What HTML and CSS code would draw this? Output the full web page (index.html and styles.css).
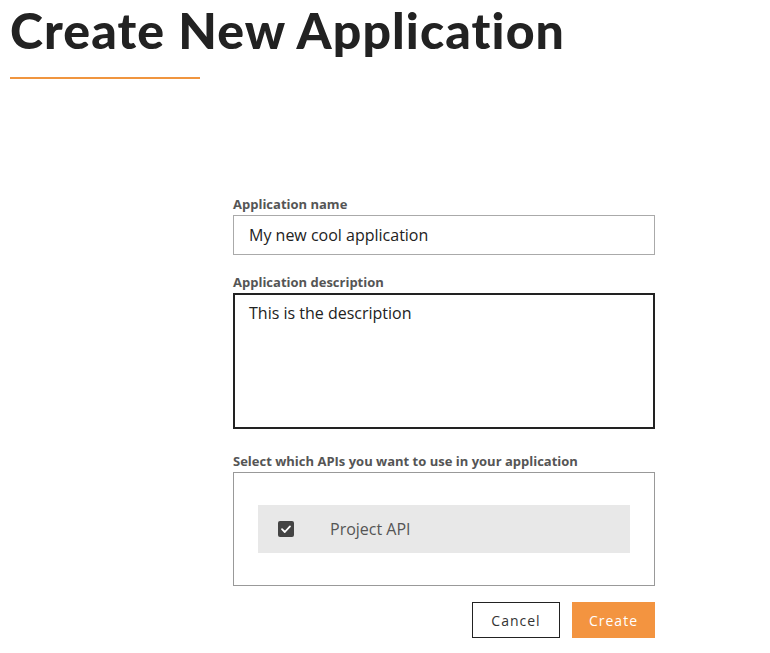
FILE: index.html
```html
<!DOCTYPE html>
<html lang="en">
<head>
<meta charset="utf-8">
<title>Create New Application</title>
<link rel="stylesheet" href="styles.css">
</head>
<body>
<div class="page">
  <header class="page-header">
    <h1 class="title">Create New Application</h1>
    <div class="title-rule"></div>
  </header>
  <form class="app-form">
    <div class="field">
      <label class="field-label">Application name</label>
      <div class="input">My new cool application</div>
    </div>
    <div class="field field-desc">
      <label class="field-label">Application description</label>
      <div class="textarea">This is the description</div>
    </div>
    <div class="field field-apis">
      <label class="field-label">Select which APIs you want to use in your application</label>
      <div class="api-box">
        <div class="api-row">
          <span class="checkbox">
            <svg width="16" height="16" viewBox="0 0 16 16"><path d="M4 8.2 L6.8 11 L12 5.4" fill="none" stroke="#fff" stroke-width="1.8" stroke-linecap="round" stroke-linejoin="round"/></svg>
          </span>
          <span class="api-name">Project API</span>
        </div>
      </div>
    </div>
    <div class="actions">
      <button type="button" class="btn btn-cancel">Cancel</button>
      <button type="button" class="btn btn-create">Create</button>
    </div>
  </form>
</div>
</body>
</html>
```
FILE: styles.css
```css
* { box-sizing: border-box; }
html, body { margin: 0; padding: 0; background: #fff; }
body { font-family: "Open Sans", Lato, sans-serif; color: #222; }
.page { padding: 0 10px; }
.title {
  margin: 0;
  font-family: Lato, sans-serif;
  font-weight: 900;
  font-size: 50px;
  line-height: 60px;
  color: #222;
  letter-spacing: 1.1px;
}
.title-rule {
  width: 190px;
  height: 2px;
  background: #f0953f;
  margin-top: 17px;
}
.app-form {
  width: 422px;
  margin: 117px 0 0 223px;
  display: flex;
  flex-direction: column;
}
.field { display: flex; flex-direction: column; margin-bottom: 19px; }
.field-desc { margin-bottom: 24px; }
.field-apis { margin-bottom: 16px; }
.field-label {
  font-size: 13px;
  font-weight: 700;
  color: #555;
  line-height: 16px;
  margin-bottom: 3px;
}
.input {
  height: 40px;
  border: 1px solid #aaa;
  padding: 0 15px;
  font-size: 16px;
  line-height: 38px;
  color: #222;
}
.textarea {
  height: 136px;
  border: 2px solid #222;
  padding: 8px 14px;
  font-size: 16px;
  line-height: 20px;
  color: #222;
}
.api-box {
  border: 1px solid #999;
  padding: 32px 24px;
}
.api-row {
  height: 48px;
  background: #e8e8e8;
  display: flex;
  align-items: center;
  padding-left: 20px;
}
.checkbox {
  width: 16px;
  height: 16px;
  border-radius: 2px;
  background: #444;
  display: flex;
}
.api-name {
  margin-left: 36px;
  font-size: 16px;
  color: #555;
}
.actions {
  display: flex;
  justify-content: flex-end;
  gap: 12px;
}
.btn {
  height: 36px;
  font-family: "Open Sans", sans-serif;
  font-size: 14px;
  letter-spacing: 1px;
  cursor: pointer;
}
.btn-cancel {
  width: 88px;
  background: #fff;
  border: 1px solid #222;
  color: #333;
}
.btn-create {
  width: 83px;
  background: #f39440;
  border: none;
  color: #fff;
}
```
